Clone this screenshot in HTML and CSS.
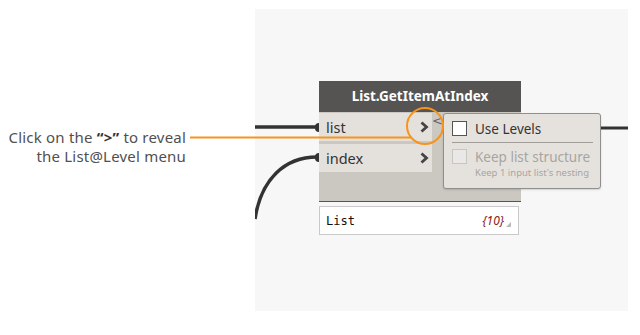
FILE: index.html
```html
<!DOCTYPE html>
<html lang="en">
<head>
  <meta charset="UTF-8">
  <title>List@Level menu</title>
  <link rel="stylesheet" href="styles.css">
</head>
<body>
  <div class="page">
    <div class="callout">
      <p>Click on the <strong>&ldquo;&gt;&rdquo;</strong> to reveal</p>
      <p>the List@Level menu</p>
    </div>

    <div class="canvas">
      <!-- wires -->
      <svg class="wires" width="373" height="302" viewBox="0 0 373 302">
        <line x1="0" y1="118" x2="62" y2="118" stroke="#333" stroke-width="3.5"/>
        <path d="M62 148 C 30 148, 6 170, 0 210" fill="none" stroke="#333" stroke-width="3.5"/>
        <line x1="346" y1="119" x2="373" y2="119" stroke="#333" stroke-width="3"/>
      </svg>

      <div class="node">
        <div class="node-title">List.GetItemAtIndex</div>
        <div class="node-body">
          <div class="ports">
            <div class="port"><span>list</span><svg class="chev" width="9" height="12" viewBox="0 0 9 12"><polyline points="1.5,1.5 6.5,6 1.5,10.5" fill="none" stroke="#444" stroke-width="2.8"/></svg></div>
            <div class="port"><span>index</span><svg class="chev" width="9" height="12" viewBox="0 0 9 12"><polyline points="1.5,1.5 6.5,6 1.5,10.5" fill="none" stroke="#444" stroke-width="2.8"/></svg></div>
          </div>
          <span class="back">&lt;</span>
        </div>
        <span class="dot dot-a"></span>
        <span class="dot dot-b"></span>
      </div>

      <div class="levels">
        <label class="opt"><span class="box"></span>Use Levels</label>
        <hr>
        <label class="opt disabled"><span class="box"></span>Keep list structure</label>
        <div class="hint">Keep 1 input list's nesting</div>
      </div>

      <div class="preview">
        <span class="type">List</span>
        <span class="count">{10}</span>
        <span class="grip"></span>
      </div>
    </div>

    <!-- callout pointer -->
    <svg class="pointer" width="640" height="335" viewBox="0 0 640 335">
      <line x1="190" y1="137.5" x2="411" y2="137.5" stroke="#f7941d" stroke-width="2"/>
      <circle cx="425" cy="126" r="18" fill="none" stroke="#f7941d" stroke-width="2"/>
    </svg>
  </div>
</body>
</html>
```

FILE: styles.css
```css
body {
  margin: 0;
  background: #fff;
  font-family: "Noto Sans", "Open Sans", sans-serif;
}
.page {
  position: relative;
  display: flex;
  width: 640px;
  height: 335px;
  padding: 9px 12px 0 0;
  box-sizing: border-box;
}
.callout {
  width: 186px;
  padding-top: 119px;
  text-align: right;
  color: #505050;
  font-size: 15px;
  letter-spacing: 0.2px;
}
.callout p {
  margin: 0;
  height: 19px;
  line-height: 19px;
}
.callout strong {
  color: #333;
}
.canvas {
  position: relative;
  margin-left: auto;
  width: 373px;
  height: 302px;
  background: #f7f7f7;
}
.wires {
  position: absolute;
  left: 0;
  top: 0;
}
.node {
  position: absolute;
  left: 64px;
  top: 72px;
  width: 202px;
}
.node-title {
  height: 31px;
  line-height: 31px;
  background: #555452;
  color: #fff;
  font-weight: bold;
  font-size: 13.5px;
  text-align: center;
}
.node-body {
  position: relative;
  height: 89px;
  background: #cbc7c1;
  border-bottom: 1px solid #555;
}
.ports {
  display: flex;
  flex-direction: column;
  gap: 3px;
  width: 113px;
  padding-top: 1px;
}
.port {
  display: flex;
  align-items: center;
  justify-content: space-between;
  height: 28px;
  padding: 0 3px 0 7px;
  background: #e4e1dc;
  color: #333;
  font-size: 14.5px;
}
.back {
  position: absolute;
  left: 113px;
  top: 1px;
  color: #666;
  font-size: 13px;
  font-family: "DejaVu Sans", sans-serif;
}
.dot {
  position: absolute;
  left: -4px;
  width: 4px;
  height: 9px;
  border-radius: 5px 0 0 5px;
  background: #333;
}
.dot-a { top: 42px; }
.dot-b { top: 72px; }
.levels {
  position: absolute;
  left: 188px;
  top: 104px;
  width: 141px;
  height: 69px;
  padding: 5px 7px 0 8px;
  background: #e5e2dd;
  border: 1px solid #8f8f8f;
  border-radius: 3px;
  box-shadow: 0 1px 2px rgba(0,0,0,0.15);
}
.opt {
  display: flex;
  align-items: center;
  gap: 8px;
  height: 19px;
  color: #333;
  font-size: 13.5px;
}
.box {
  width: 13px;
  height: 13px;
  background: #fff;
  border: 1px solid #555;
}
.levels hr {
  margin: 4px 0 4px;
  border: none;
  border-top: 1px solid #a09d98;
}
.opt.disabled {
  color: #a7a5a2;
}
.opt.disabled .box {
  background: #e9e8e6;
  border-color: #c8c6c3;
}
.hint {
  padding-left: 23px;
  color: #a7a5a2;
  font-size: 9.5px;
  line-height: 14px;
}
.preview {
  position: absolute;
  left: 64px;
  top: 197px;
  width: 200px;
  height: 29px;
  display: flex;
  align-items: center;
  padding: 0 6px;
  box-sizing: border-box;
  background: #fff;
  border: 1px solid #c9c9c9;
}
.type {
  font-family: "DejaVu Sans Mono", monospace;
  font-size: 12px;
  color: #111;
}
.count {
  margin-left: auto;
  margin-right: 8px;
  color: #8b1a1a;
  font-style: italic;
  font-size: 12px;
}
.grip {
  position: absolute;
  right: 7px;
  bottom: 7px;
  width: 0;
  height: 0;
  border-left: 5px solid transparent;
  border-bottom: 5px solid #bbb;
}
.pointer {
  position: absolute;
  left: 0;
  top: 0;
  pointer-events: none;
}
```
